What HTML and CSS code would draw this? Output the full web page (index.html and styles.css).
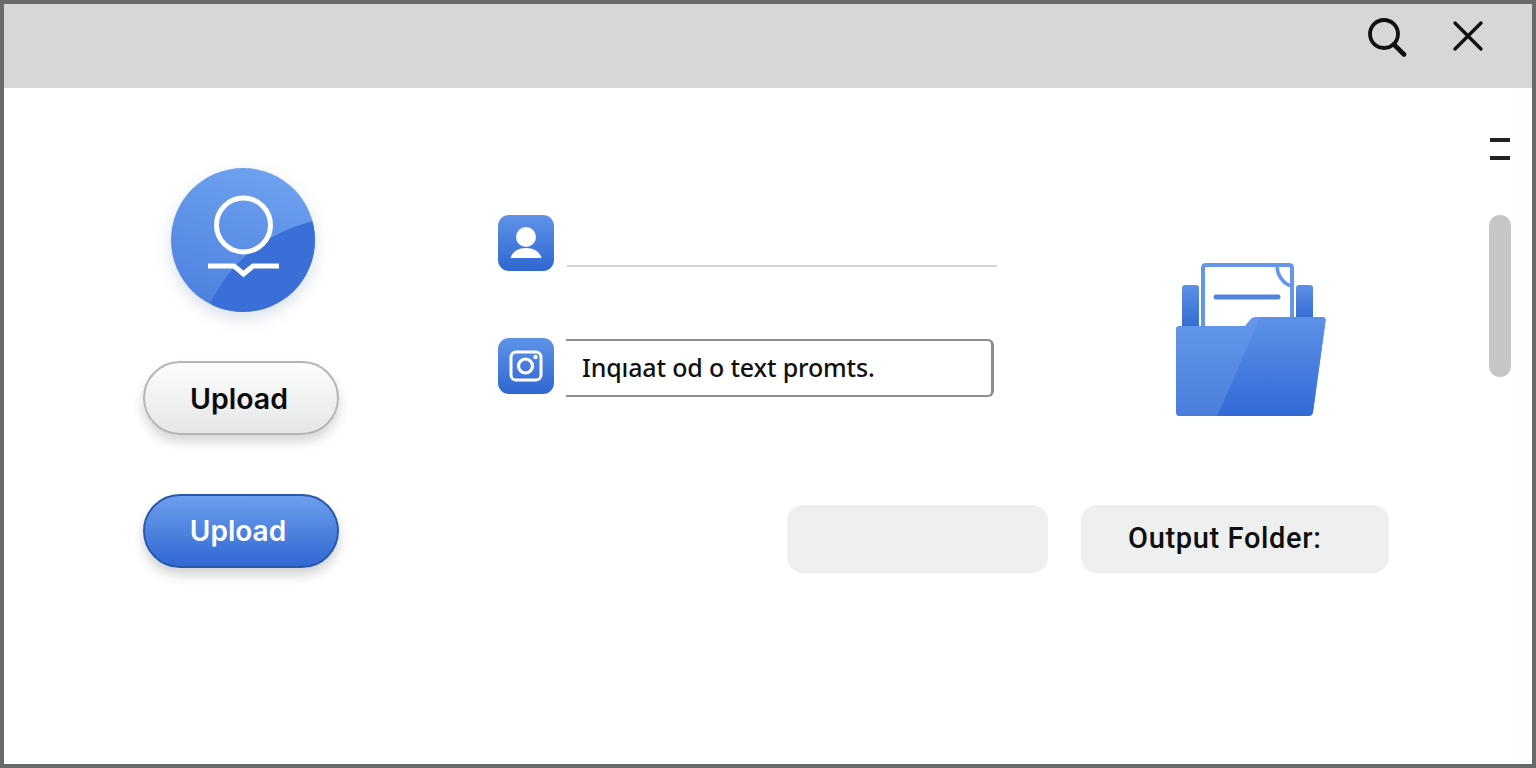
FILE: index.html
```html
<!DOCTYPE html>
<html lang="en">
<head>
    <meta charset="UTF-8">
    <meta name="viewport" content="width=device-width, initial-scale=1.0">
    <title>Upload</title>
    <link rel="stylesheet" href="styles.css">
</head>
<body>
    <div class="window">
        <header class="titlebar">
            <svg class="search-icon" width="40" height="40" viewBox="0 0 40 40">
                <circle cx="17" cy="16" r="14" fill="none" stroke="#111" stroke-width="3.8"/>
                <path d="M27 26.5 L37 36.5" stroke="#111" stroke-width="4.6" stroke-linecap="round"/>
            </svg>
            <svg class="close-icon" width="32" height="32" viewBox="0 0 32 32">
                <path d="M3 3 L29 29 M29 3 L3 29" stroke="#111" stroke-width="3.4" stroke-linecap="round"/>
            </svg>
        </header>

        <main class="content">
            <section class="left-col">
                <svg class="avatar" width="144" height="144" viewBox="0 0 144 144">
                    <defs>
                        <linearGradient id="avatarBg" x1="0.6" y1="0" x2="0.3" y2="1">
                            <stop offset="0" stop-color="#6ea1ee"/>
                            <stop offset="1" stop-color="#4c80de"/>
                        </linearGradient>
                        <clipPath id="avatarClip"><circle cx="72" cy="72" r="72"/></clipPath>
                    </defs>
                    <circle cx="72" cy="72" r="72" fill="url(#avatarBg)"/>
                    <path clip-path="url(#avatarClip)" d="M38 138 C58 96 90 66 146 52 L146 146 L38 146 Z" fill="#3a6fd7"/>
                    <circle cx="72.500" cy="57" r="27" fill="none" stroke="#fff" stroke-width="5"/>
                    <path d="M37 98 L63 98 L72.500 106 L82 98 L108 98" fill="none" stroke="#fff" stroke-width="5"/>
                </svg>
                <button class="btn btn-light" type="button">Upload</button>
                <button class="btn btn-blue" type="button">Upload</button>
            </section>

            <section class="right-col">
                <div class="top-row">
                    <div class="fields">
                        <div class="field">
                            <svg class="tile" width="56" height="56" viewBox="0 0 56 56">
                                <defs>
                                    <linearGradient id="tileBg" x1="0" y1="0" x2="0" y2="1">
                                        <stop offset="0" stop-color="#5f93e8"/>
                                        <stop offset="1" stop-color="#2f67d0"/>
                                    </linearGradient>
                                </defs>
                                <rect width="56" height="56" rx="11" fill="url(#tileBg)"/>
                                <circle cx="28" cy="22" r="10" fill="#fff"/>
                                <path d="M12.500 43 C14 37 20 33 28 33 C36 33 42 37 43.500 43 Z" fill="#fff"/>
                            </svg>
                            <div class="line-input"></div>
                        </div>
                        <div class="field">
                            <svg class="tile" width="56" height="56" viewBox="0 0 56 56">
                                <rect width="56" height="56" rx="11" fill="url(#tileBg)"/>
                                <rect x="13" y="14" width="30" height="28" rx="5" fill="none" stroke="#fff" stroke-width="3"/>
                                <circle cx="27.500" cy="28" r="7" fill="none" stroke="#fff" stroke-width="3.200"/>
                                <circle cx="37.500" cy="19" r="2.200" fill="#fff"/>
                            </svg>
                            <div class="text-input">Inqıaat od o text promts.</div>
                        </div>
                    </div>

                    <svg class="folder" width="152" height="154" viewBox="0 0 152 154">
                        <defs>
                            <linearGradient id="folderBg" x1="0" y1="0" x2="0" y2="1">
                                <stop offset="0" stop-color="#6598ea"/>
                                <stop offset="1" stop-color="#4a7edc"/>
                            </linearGradient>
                            <linearGradient id="folderDark" x1="0" y1="0" x2="0" y2="1">
                                <stop offset="0" stop-color="#5f93e8"/>
                                <stop offset="1" stop-color="#3169d6"/>
                            </linearGradient>
                            <linearGradient id="tabBg" x1="0" y1="0" x2="0" y2="1">
                                <stop offset="0" stop-color="#5c90e6"/>
                                <stop offset="1" stop-color="#2f66d0"/>
                            </linearGradient>
                            <clipPath id="folderClip">
                                <path d="M4 63 L70 63 L75 57 Q77 54 81 54 L147 54 Q151 54 150.500 58 L138 149 Q137.500 153 133 153 L4 153 Q1 153 1 149 L1 66 Q1 63 4 63 Z"/>
                            </clipPath>
                        </defs>
                        <rect x="7" y="22" width="17" height="48" rx="3" fill="url(#tabBg)"/>
                        <rect x="121" y="22" width="17" height="40" rx="3" fill="url(#tabBg)"/>
                        <path d="M28 70 L28 5 Q28 2 31 2 L114 2 Q117 2 117 5 L117 62 Z" fill="#fff"/>
                        <path d="M28 70 L28 5 Q28 2 31 2 L114 2 Q117 2 117 5 L117 62" fill="none" stroke="#6597e8" stroke-width="4"/>
                        <path d="M102 4 Q103 17 115 23" fill="none" stroke="#6597e8" stroke-width="3.500"/>
                        <path d="M41 34 L103 34" stroke="#4f84de" stroke-width="5" stroke-linecap="round"/>
                        <path d="M4 63 L70 63 L75 57 Q77 54 81 54 L147 54 Q151 54 150.500 58 L138 149 Q137.500 153 133 153 L4 153 Q1 153 1 149 L1 66 Q1 63 4 63 Z" fill="url(#folderBg)"/>
                        <path clip-path="url(#folderClip)" d="M87 50 L155 50 L155 156 L41 156 Z" fill="url(#folderDark)"/>
                    </svg>
                </div>

                <div class="bottom-row">
                    <div class="chip chip-empty"></div>
                    <div class="chip chip-output">Output Folder:</div>
                </div>
            </section>

            <div class="menu-lines"><span></span><span></span></div>
            <div class="scroll-thumb"></div>
        </main>
    </div>
</body>
</html>
```

FILE: styles.css
```css
/* window frame */
html, body {
    margin: 0;
    padding: 0;
    height: 100%;
    overflow: hidden;
}
body {
    font-family: "Noto Sans", "Open Sans", sans-serif;
    background-color: #fff;
}
.window {
    box-sizing: border-box;
    width: 1536px;
    height: 768px;
    border: 4px solid #666b6a;
    display: flex;
    flex-direction: column;
}
.titlebar {
    height: 84px;
    flex: none;
    background-color: #d6d8d7;
    display: flex;
    align-items: flex-start;
    justify-content: flex-end;
}
.search-icon {
    margin-top: 14px;
}
.close-icon {
    margin: 16px 48px 0 45px;
}

/* main area */
.content {
    position: relative;
    flex: 1;
    display: flex;
    padding: 80px 0 0 139px;
}
.left-col {
    width: 196px;
    display: flex;
    flex-direction: column;
    align-items: center;
}
.avatar {
    margin-left: 3px;
    filter: drop-shadow(0 6px 8px rgba(40, 70, 130, 0.18));
}
.btn {
    box-sizing: border-box;
    width: 196px;
    height: 74px;
    padding: 0 4px 0 0;
    border-radius: 37px;
    font-family: Inter, "Noto Sans", sans-serif;
    font-size: 28.500px;
    cursor: pointer;
}
.btn-light {
    margin-top: 49px;
    border: 2px solid #b4b5b5;
    background: linear-gradient(#fdfdfd, #e5e6e7);
    color: #0a0a0a;
    font-weight: 600;
    box-shadow: 0 7px 12px rgba(0, 0, 0, 0.16);
}
.btn-blue {
    margin-top: 59px;
    padding-right: 6px;
    border: 2px solid #2a58ad;
    background: linear-gradient(#6c9eec, #3168d3);
    color: #fff;
    font-weight: 600;
    font-size: 28px;
    box-shadow: 0 7px 12px rgba(0, 0, 0, 0.18);
}

.right-col {
    margin-left: 159px;
    padding-top: 47px;
}
.top-row {
    display: flex;
    align-items: flex-start;
}
.fields {
    width: 499px;
    display: flex;
    flex-direction: column;
    gap: 67px;
}
.field {
    display: flex;
    gap: 12px;
    height: 56px;
}
.tile {
    flex: none;
}
.line-input {
    width: 430px;
    height: 2px;
    margin: 50px 0 0 1px;
    background-color: #d3d5d5;
}
.text-input {
    box-sizing: border-box;
    width: 428px;
    height: 58px;
    margin-top: 1px;
    padding-left: 16px;
    border: 2px solid #8c8f91;
    border-left: none;
    border-right-width: 3px;
    border-radius: 0 6px 6px 0;
    font-size: 25px;
    font-weight: 500;
    letter-spacing: -0.16px;
    line-height: 53px;
    color: #111;
}
.folder {
    flex: none;
    margin: 48px 0 0 178px;
}
.bottom-row {
    display: flex;
    gap: 33px;
    margin: 88px 0 0 289px;
}
.chip {
    box-sizing: border-box;
    height: 68px;
    border-radius: 16px;
    background-color: #eeefef;
}
.chip-empty {
    width: 261px;
}
.chip-output {
    width: 308px;
    padding-left: 47px;
    font-family: Roboto, "Noto Sans", sans-serif;
    font-size: 29px;
    font-weight: 500;
    letter-spacing: 0.65px;
    line-height: 66px;
    color: #0f0f0f;
}

/* things at the right edge */
.menu-lines {
    position: absolute;
    top: 50px;
    right: 22px;
    display: flex;
    flex-direction: column;
    gap: 14px;
}
.menu-lines span {
    display: block;
    width: 20px;
    height: 4px;
    background-color: #222;
}
.scroll-thumb {
    position: absolute;
    top: 127px;
    right: 21px;
    width: 22px;
    height: 162px;
    border-radius: 11px;
    background-color: #c5c6c6;
}
```
